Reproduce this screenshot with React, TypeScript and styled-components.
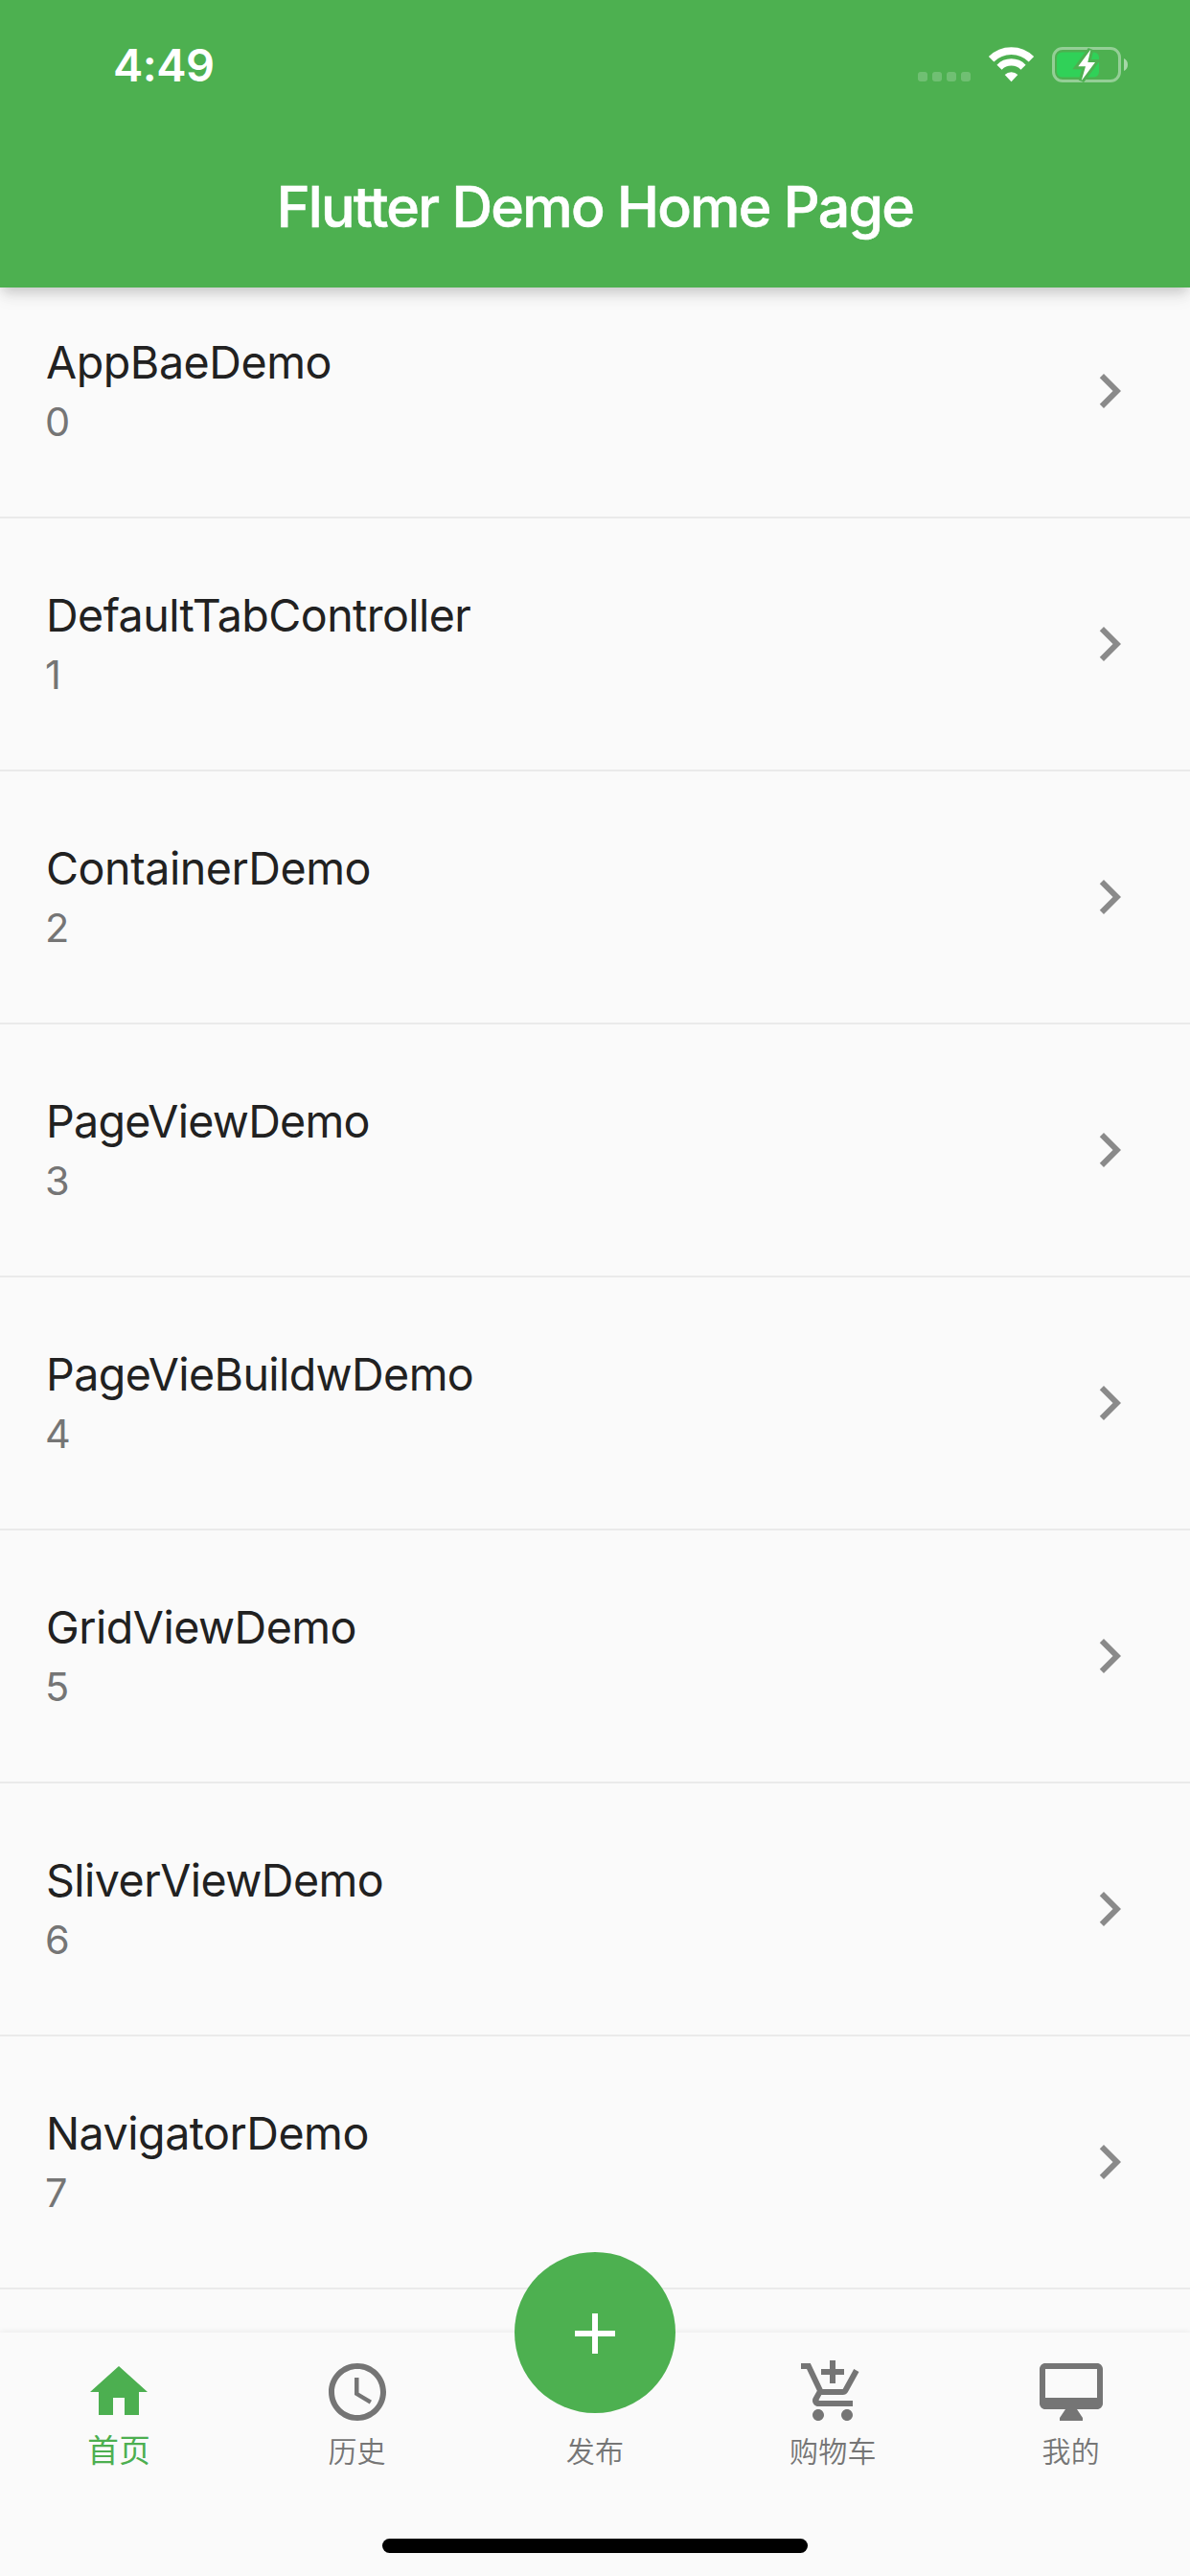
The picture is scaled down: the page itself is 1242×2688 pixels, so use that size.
import React from "react";
import styled, { createGlobalStyle } from "styled-components";
import { MdAccessTime, MdAddShoppingCart, MdAdd, MdChevronRight } from "react-icons/md";

const GREEN = "#4db050";

const GlobalStyle = createGlobalStyle`
  * { box-sizing: border-box; }
  body { margin: 0; background: #fafafa; }
`;

const Screen = styled.div`
  width: 1242px;
  height: 2688px;
  display: flex;
  flex-direction: column;
  overflow: hidden;
  background: #fafafa;
  font-family: Inter, "Noto Sans CJK SC", sans-serif;
`;

const Header = styled.header`
  flex: none;
  z-index: 1;
  height: 300px;
  background: ${GREEN};
  color: #fff;
  box-shadow: 0 6px 12px -3px rgba(0, 0, 0, 0.16), 0 12px 15px rgba(0, 0, 0, 0.05), 0 3px 24px rgba(0, 0, 0, 0.04);
`;

const StatusBar = styled.div`
  height: 132px;
  display: flex;
  justify-content: space-between;
  padding: 0 64px 0 118px;
`;

const Clock = styled.span`
  font-size: 47px;
  line-height: 56px;
  font-weight: 600;
  padding-top: 40px;
  letter-spacing: -0.5px;
`;

const StatusIcons = styled.div`
  display: flex;
  align-items: flex-start;
  padding-top: 48px;
`;

const SignalDots = styled.div`
  display: flex;
  gap: 5px;
  padding-top: 27px;
  margin-right: 18px;
`;

const Dot = styled.i`
  width: 10px;
  height: 10px;
  border-radius: 3px;
  background: rgba(255, 255, 255, 0.2);
`;

const WifiGlyph = styled.svg`
  margin-right: 17px;
`;

const Title = styled.h1`
  margin: 0;
  height: 168px;
  line-height: 168px;
  text-align: center;
  font-size: 59px;
  font-weight: 500;
  letter-spacing: -1.7px;
  -webkit-text-stroke: 0.6px #fff;
`;

const List = styled.main`
  flex: none;
  margin-top: -23px;
  height: 2157px;
  overflow: hidden;
`;

const Row = styled.div`
  height: 264px;
  display: flex;
  align-items: center;
  justify-content: space-between;
  padding: 0 48px;
  border-bottom: 2px solid #eaeaea;
`;

const RowText = styled.div`
  display: flex;
  flex-direction: column;
`;

const RowTitle = styled.span<{ $spacing: number }>`
  font-size: 46.6px;
  line-height: 66px;
  letter-spacing: ${(p) => p.$spacing}px;
  color: #212121;
`;

const RowSub = styled.span`
  margin: -1px 0 1px -1px;
  font-size: 41.5px;
  line-height: 60px;
  color: #757575;
`;

const TabBar = styled.nav`
  flex: none;
  height: 254px;
  z-index: 1;
  background: #fafafa;
  box-shadow: 0 -2px 6px rgba(0, 0, 0, 0.05);
`;

const Tabs = styled.div`
  display: grid;
  grid-template-columns: repeat(5, 1fr);
  height: 215px;
`;

const Tab = styled.div<{ $active?: boolean }>`
  display: flex;
  flex-direction: column;
  align-items: center;
  padding-top: 26px;
  color: ${(p) => (p.$active ? "#4caf50" : "#757575")};
`;

const TabIcon = styled.span`
  display: flex;
  width: 72px;
  height: 72px;
  justify-content: center;
`;

const TabLabel = styled.span<{ $active?: boolean }>`
  font-family: "Noto Sans CJK SC", sans-serif;
  font-size: ${(p) => (p.$active ? 32.6 : 30)}px;
  letter-spacing: ${(p) => (p.$active ? 0.4 : 0.2)}px;
  line-height: 44px;
  font-weight: ${(p) => (p.$active ? 400 : 350)};
  padding-top: ${(p) => (p.$active ? 1 : 2)}px;
`;

const Fab = styled.button`
  flex: none;
  width: 168px;
  height: 168px;
  margin-top: -110px;
  margin-bottom: 14px;
  padding: 2px 0 0;
  border: 0;
  border-radius: 50%;
  display: flex;
  align-items: center;
  justify-content: center;
  background: ${GREEN};
  color: #fff;
`;

const HomeIndicator = styled.div`
  width: 444px;
  height: 15px;
  margin: 0 auto;
  border-radius: 7.5px;
  background: #000;
`;

const WifiIcon = () => (
  <WifiGlyph width="49" height="39" viewBox="0 0 49 39" fill="none" stroke="#fff">
    <path d="M3.600 13.800A29.500 29.500 0 0 1 45.400 13.800" strokeWidth="7.700" />
    <path d="M12 22.200A17.500 17.500 0 0 1 37 22.200" strokeWidth="7.200" />
    <path d="M24.500 37.300 17.700 30A9.500 9.500 0 0 1 31.300 30z" fill="#fff" stroke="none" />
  </WifiGlyph>
);

const BatteryIcon = () => (
  <svg width="81" height="40" viewBox="0 0 81 40">
    <rect x="2.5" y="2.5" width="69" height="34" rx="9.5" fill="none" stroke="#fff" strokeOpacity=".4" strokeWidth="3" />
    <path d="M76 13v13c2.500-1 4-3.500 4-6.500s-1.500-5.500-4-6.500z" fill="#fff" fillOpacity=".5" />
    <rect x="6" y="6.5" width="44" height="26" rx="5.5" fill="#30d158" />
    <path
      d="M41.300 3.700 28.300 21.300h7.700L31.700 36.300 46 17h-7.700z"
      fill="#fff"
      stroke={GREEN}
      strokeWidth="6"
      paintOrder="stroke"
    />
  </svg>
);

const HomeIcon = () => (
  <svg width="72" height="72" viewBox="0 0 24 24" fill="currentColor">
    <path d="M10 20v-6h4v6h5v-8h3L12 3 2 12h3v8z" />
  </svg>
);

const DesktopIcon = () => (
  <svg width="72" height="72" viewBox="0 0 24 24" fill="currentColor">
    <path d="M21 2H3c-1.100 0-2 .9-2 2v12c0 1.100.9 2 2 2h7l-2 3v1h8v-1l-2-3h7c1.100 0 2-.9 2-2V4c0-1.100-.9-2-2-2zm0 12H3V4h18v10z" />
  </svg>
);

const items: { name: string; spacing: number }[] = [
  { name: "AppBaeDemo", spacing: -0.45 },
  { name: "DefaultTabController", spacing: -0.57 },
  { name: "ContainerDemo", spacing: -0.45 },
  { name: "PageViewDemo", spacing: -0.75 },
  { name: "PageVieBuildwDemo", spacing: -0.62 },
  { name: "GridViewDemo", spacing: -0.52 },
  { name: "SliverViewDemo", spacing: -0.55 },
  { name: "NavigatorDemo", spacing: -0.5 },
];

export default function App() {
  return (
    <>
      <GlobalStyle />
      <Screen>
        <Header>
          <StatusBar>
            <Clock>4:49</Clock>
            <StatusIcons>
              <SignalDots>
                <Dot />
                <Dot />
                <Dot />
                <Dot />
              </SignalDots>
              <WifiIcon />
              <BatteryIcon />
            </StatusIcons>
          </StatusBar>
          <Title>Flutter Demo Home Page</Title>
        </Header>
        <List>
          {items.map((item, i) => (
            <Row key={item.name}>
              <RowText>
                <RowTitle $spacing={item.spacing}>{item.name}</RowTitle>
                <RowSub>{i}</RowSub>
              </RowText>
              <MdChevronRight size={72} color="#8a8a8a" />
            </Row>
          ))}
        </List>
        <TabBar>
          <Tabs>
            <Tab $active>
              <TabIcon><HomeIcon /></TabIcon>
              <TabLabel $active>首页</TabLabel>
            </Tab>
            <Tab>
              <TabIcon><MdAccessTime size={72} /></TabIcon>
              <TabLabel>历史</TabLabel>
            </Tab>
            <Tab>
              <Fab aria-label="发布"><MdAdd size={72} /></Fab>
              <TabLabel>发布</TabLabel>
            </Tab>
            <Tab>
              <TabIcon><MdAddShoppingCart size={72} /></TabIcon>
              <TabLabel>购物车</TabLabel>
            </Tab>
            <Tab>
              <TabIcon><DesktopIcon /></TabIcon>
              <TabLabel>我的</TabLabel>
            </Tab>
          </Tabs>
          <HomeIndicator />
        </TabBar>
      </Screen>
    </>
  );
}
